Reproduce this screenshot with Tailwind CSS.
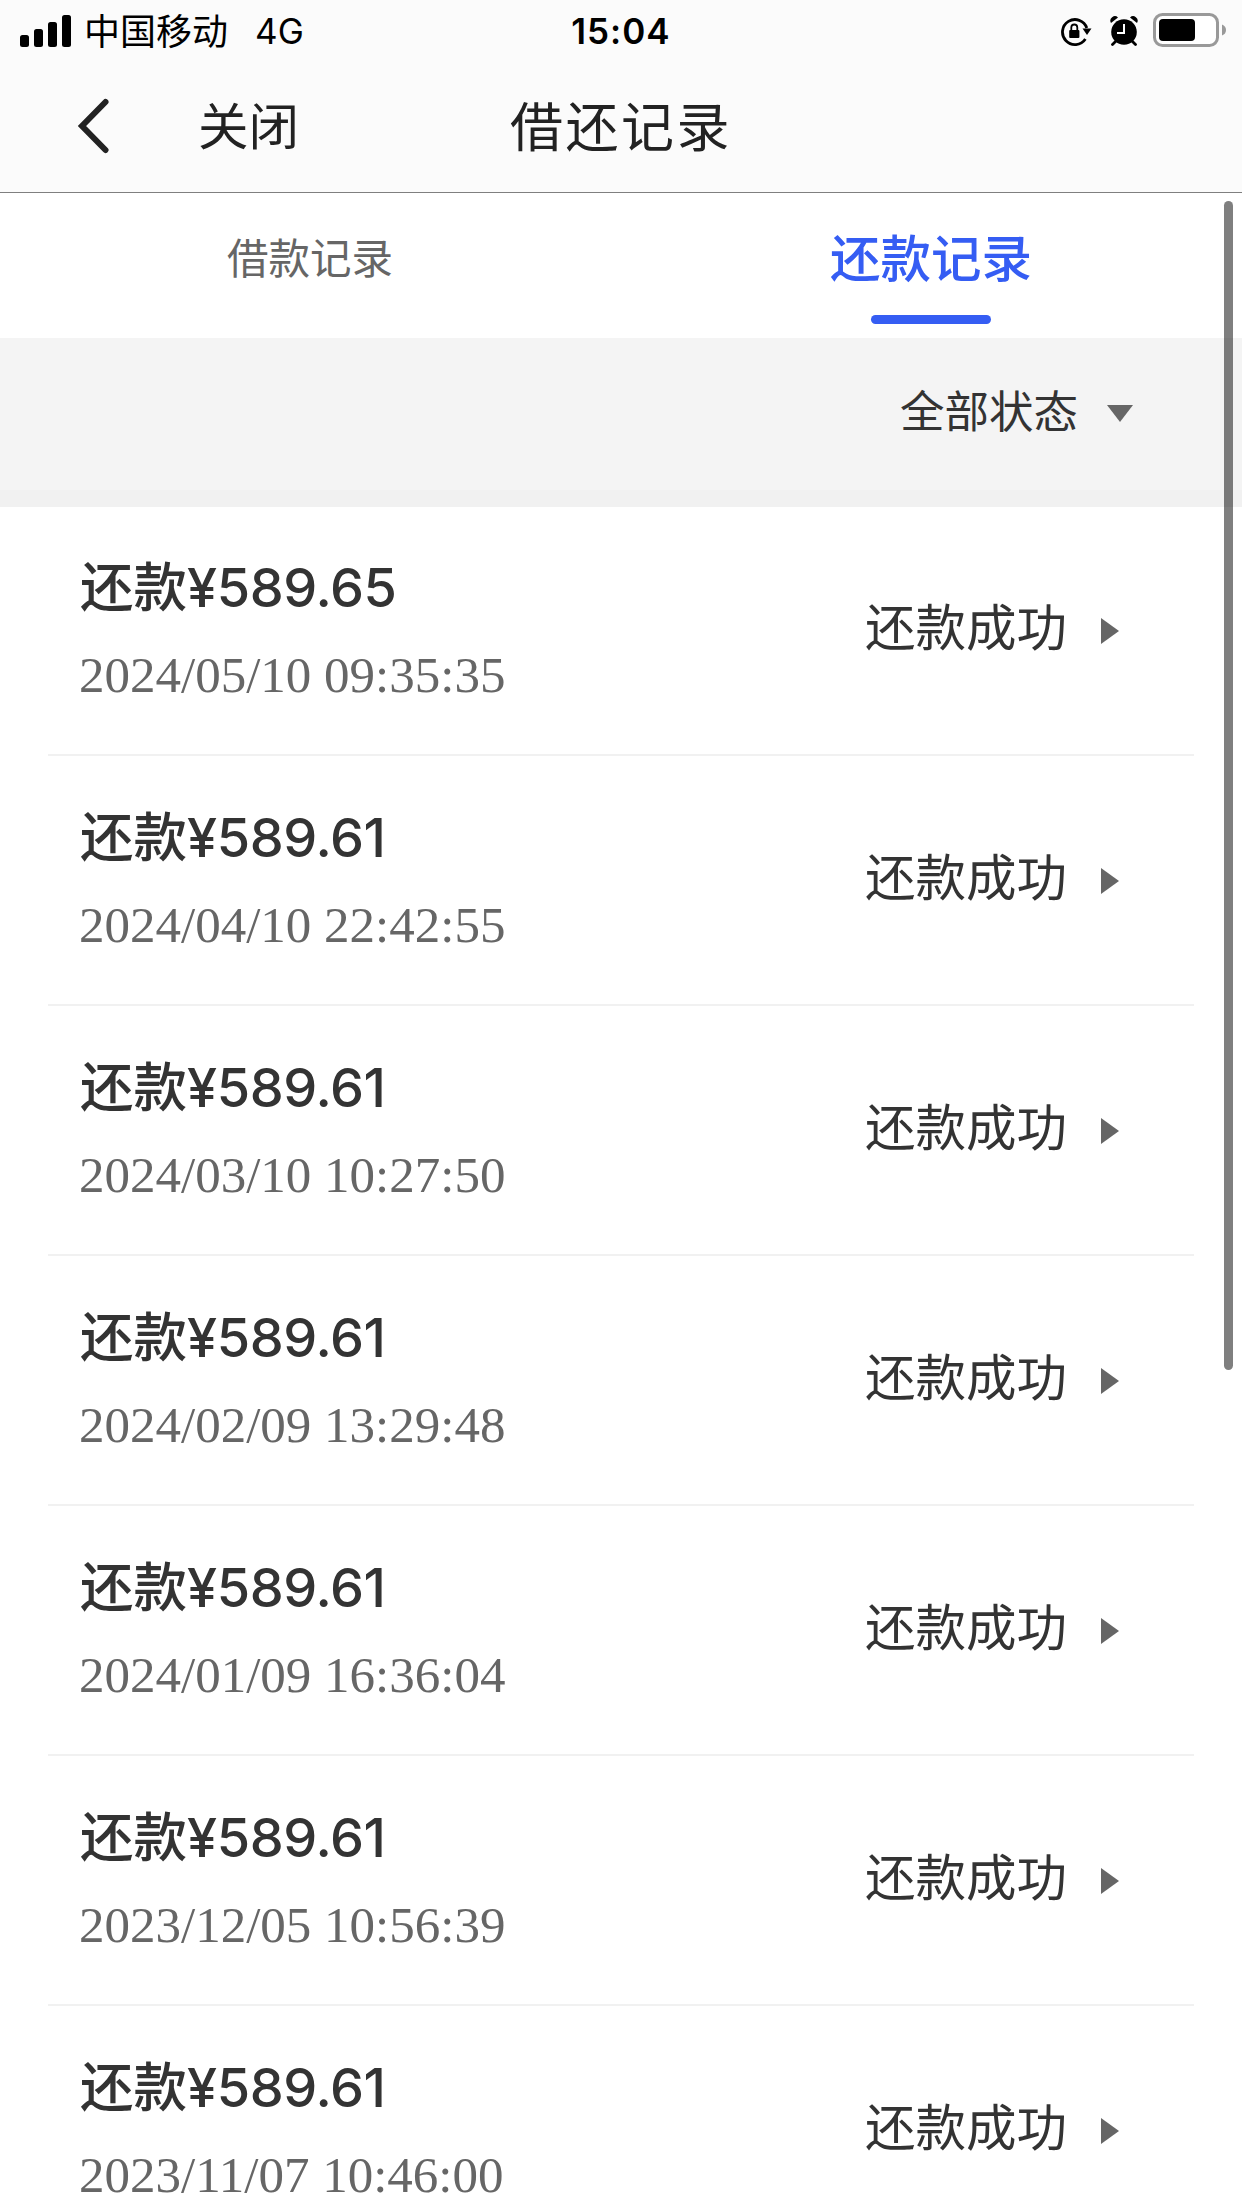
<!DOCTYPE html>
<html lang="zh-CN">
<head>
<meta charset="utf-8">
<title>借还记录</title>
<script src="https://cdn.jsdelivr.net/npm/@tailwindcss/browser@4"></script>
</head>
<body class="relative h-[2208px] w-[1242px] overflow-hidden bg-white font-['Inter','Noto_Sans_CJK_SC',sans-serif] text-[#333333]">
<header class="h-[193px] border-b border-[#7f7f7f] bg-[#fbfbfb]">
  <div class="grid h-[60px] grid-cols-3 items-start pt-[7px] text-black">
    <div class="flex h-[48px] items-center pl-5">
      <svg class="mb-px h-[32px] w-[51px]" viewBox="0 0 51 32"><rect y="20" width="9" height="12" rx="2.5"/><rect x="14" y="14" width="9" height="18" rx="2.5"/><rect x="28" y="7" width="9" height="25" rx="2.5"/><rect x="42" width="9" height="32" rx="2.5"/></svg>
      <span class="ml-[13px] mt-[2px] text-[36px] leading-[48px]">中国移动</span>
      <span class="ml-[27px] text-[35px] leading-[48px]">4G</span>
    </div>
    <div class="text-center text-[35px] font-semibold leading-[48px] tracking-[1px]">15:04</div>
    <div class="flex h-[48px] items-center justify-end pr-[15px]">
      <svg class="mt-px h-[30px] w-[32px]" viewBox="0 0 32 30" fill="none" stroke="#000"><path d="M26.8 11A12.5 12.5 0 1 0 25.4 22" stroke-width="2.8"/><path d="M22.5 11.5h9l-4.5 6.5z" fill="#000" stroke="none"/><rect x="9.2" y="13" width="10.2" height="8" rx="1" fill="#000" stroke="none"/><path d="M11.3 13.5v-3a3 3 0 0 1 6 0v3" stroke-width="1.8"/></svg>
      <svg class="ml-[18px] h-[30px] w-[28px]" viewBox="0 0 28 30"><circle cx="14" cy="16" r="12.8"/><path d="M1 7a4.5 4.5 0 0 1 7-5.500zM27 7a4.500 4.500 0 0 0-7-5.500z"/><path d="M6 25l-3.500 3.500M22 25l3.500 3.500" stroke="#000" stroke-width="2.800" stroke-linecap="round"/><path d="M14 8v9H7" fill="none" stroke="#fff" stroke-width="2"/></svg>
      <svg class="ml-[15px] mb-[2px] h-[34px] w-[74px]" viewBox="0 0 74 34"><rect x="1.500" y="1.500" width="63" height="31" rx="8" fill="#fff" stroke="#999" stroke-width="3"/><rect x="6" y="6" width="36" height="22" rx="4"/><path d="M69 11.500q4 1.500 4 5.500t-4 5.500z" fill="#999"/></svg>
    </div>
  </div>
  <div class="grid h-[132px] grid-cols-[1fr_auto_1fr] items-center text-[#222222]">
    <div class="flex items-center pl-[77px]">
      <svg class="h-[56px] w-[33px]" viewBox="0 0 33 56" fill="none" stroke="#222" stroke-width="6" stroke-linecap="round" stroke-linejoin="miter"><path d="M28.500 4L5 28l23.500 24"/></svg>
      <span class="ml-[88px] mt-[2px] text-[50.500px] leading-[72px]">关闭</span>
    </div>
    <h1 class="mt-[3px] text-[53px] leading-[72px] tracking-[2.500px]">借还记录</h1>
    <div></div>
  </div>
</header>
<nav class="grid h-[145px] grid-cols-2 text-center">
  <div class="pt-[36px] pr-px text-[41.500px] leading-[60px] text-[#666666]">借款记录</div>
  <div class="flex flex-col items-center pt-[36px] pr-px text-[50.500px] font-medium leading-[60px] text-[#355df3]">还款记录
    <div class="mt-[26px] h-[9px] w-[120px] rounded-full bg-[#355df3]"></div>
  </div>
</nav>
<div class="flex h-[169px] items-start justify-end border-b-[17px] border-[#f1f1f1] bg-[#f4f4f4] pr-[109px] pt-[44px]">
  <span class="text-[44.500px] leading-[60px]">全部状态</span>
  <svg class="ml-[29px] mt-[23px] h-[17px] w-[26px]" viewBox="0 0 26 17"><path d="M0 0h26L13 17z" fill="#666"/></svg>
</div>
<main id="list" class="-mt-px px-[48px]"></main>
<div class="absolute right-[9px] top-[201px] h-[1169px] w-[9px] rounded-full bg-black/50"></div>
<template id="row">
  <div class="flex h-[250px] justify-between border-b-2 border-[#f1f1f1] pl-[31px] pr-[75px]">
    <div class="pt-[47px]">
      <div class="pl-px text-[54px] font-medium leading-[70px]"><span class="text-[53.500px]">还款</span><span class="amount tracking-[-0.400px]"></span></div>
      <div class="date mt-[23px] font-['Liberation_Serif',serif] text-[51px] leading-[58px] text-[#666666]"></div>
    </div>
    <div class="mt-[86px] flex h-[72px] items-center">
      <span class="text-[50.500px] leading-[72px]">还款成功</span>
      <svg class="ml-[34px] mt-[6px] h-[26px] w-[18px]" viewBox="0 0 18 26"><path d="M0 0l18 13L0 26z" fill="#666"/></svg>
    </div>
  </div>
</template>
<script>
const records = [
  ['589.65', '2024/05/10 09:35:35'],
  ['589.61', '2024/04/10 22:42:55'],
  ['589.61', '2024/03/10 10:27:50'],
  ['589.61', '2024/02/09 13:29:48'],
  ['589.61', '2024/01/09 16:36:04'],
  ['589.61', '2023/12/05 10:56:39'],
  ['589.61', '2023/11/07 10:46:00'],
];
const row = document.getElementById('row');
for (const [amount, date] of records) {
  const el = row.content.cloneNode(true);
  el.querySelector('.amount').textContent = '¥' + amount;
  el.querySelector('.date').textContent = date;
  document.getElementById('list').append(el);
}
</script>
</body>
</html>
